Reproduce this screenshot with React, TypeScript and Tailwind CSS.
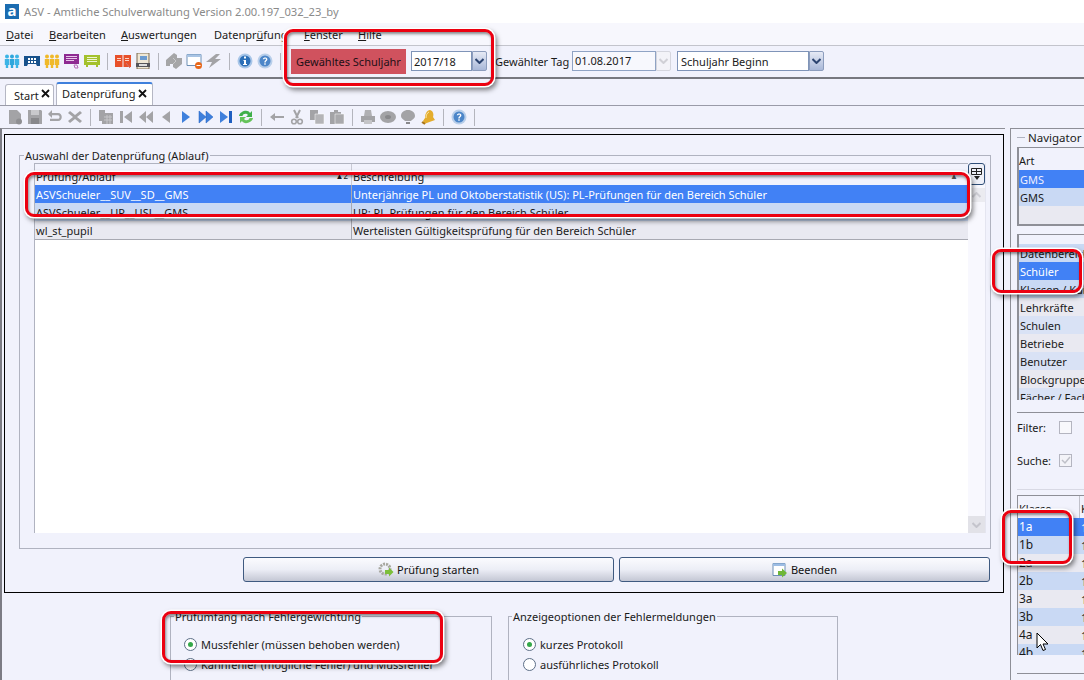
import React from 'react';

const Svg: React.FC<{ children: React.ReactNode }> = ({ children }) => (
  <svg width="16" height="16" viewBox="0 0 16 16" className="shrink-0">
    {children}
  </svg>
);

const G = '#a3a3a6';
const Blue = '#3f80dc';

const Person = ({ x, c }: { x: number; c: string }) => (
  <g fill={c}>
    <circle cx={x} cy="3.500" r="2" />
    <path d={`M${x - 2.2} 6h4.400v6h-1v3h-2.400v-3h-1z`} />
  </g>
);

const HelpIcon = () => (
  <Svg>
    <circle cx="8" cy="8" r="7.500" fill="#b9cfea" />
    <circle cx="8" cy="8" r="5.500" fill="#4c86c9" />
    <path d="M5.800 6.200C6 3.800 10.400 3.800 10.400 6.300 10.400 8 8.700 8 8.700 9.500H7.300C7.300 7.500 9 7.500 9 6.300 9 5.200 7.300 5.200 7.200 6.200zM7.300 10.300h1.400v1.500H7.300z" fill="#fff" />
  </Svg>
);

const topIcons: React.ReactNode[] = [
  <Svg key="a"><Person x={3} c="#3cb4e6" /><Person x={8} c="#2fa6dc" /><Person x={13} c="#3cb4e6" /></Svg>,
  <Svg key="b"><path d="M0 3h16v10h-3l-1-2H4l-1 2H0z" fill="#17518c" /><path d="M4 5h2v2H4zm3 0h2v2H7zm3 0h2v2h-2zM4 8h2v2H4zm3 0h2v2H7zm3 0h2v2h-2z" fill="#fff" /></Svg>,
  <Svg key="c"><Person x={3} c="#f0b92a" /><Person x={8} c="#f0b92a" /><Person x={13} c="#f0b92a" /></Svg>,
  <Svg key="d"><path d="M0 1h15v10H0z" fill="#8e2a92" /><path d="M2 3h11v1H2zm0 2h11v1H2zm0 2h8v1H2z" fill="#e9c8ea" /><path d="M10 12l3 0 1 3-3 0z" fill="none" stroke="#b56ab8" /></Svg>,
  <Svg key="e"><path d="M0 2h16v10H0z" fill="#a3c12d" /><path d="M3 4h10v1H3zm0 2h10v1H3zm0 2h10v1H3z" fill="#eef5cf" /><path d="M2 12h2v2H2zm10 0h2v2h-2z" fill="#a3c12d" /></Svg>,
  'sep',
  <Svg key="f"><path d="M0 2h7.500v12H0zM8.500 2H16v12H8.500z" fill="#e8502a" /><path d="M2 5h4v1H2zm0 2h4v1H2zm8-2h4v1h-4zm0 2h4v1h-4z" fill="#fbd3c4" /><path d="M11 10l4 5" stroke="#c77" /></Svg>,
  <Svg key="g"><path d="M2 0h12v16H2z" fill="#efe7d5" stroke="#7a6a50" /><path d="M5 3h7v4H5z" fill="#6d9bd0" /><path d="M1 10h14v4H1z" fill="#55555a" /><path d="M4 11h8v2H4z" fill="#ddd" /></Svg>,
  'sep',
  <Svg key="h"><path d="M0 7l8-7 3 2v3h5v6l-6 5-3-2v-3H4v2H0z" fill="#a5a5a7" /><path d="M7 5l3 3-3 3" fill="none" stroke="#c8c8ca" /></Svg>,
  <Svg key="i"><path d="M1 1.500h14v11H1z" fill="#fff" stroke="#6d8fb5" /><path d="M1 1.500h14v2.500H1z" fill="#a9c4e4" /><circle cx="12.500" cy="12.500" r="3.500" fill="#e8671a" /><path d="M10.500 12h4v1h-4z" fill="#fff" /></Svg>,
  <Svg key="j"><path d="M10 1L0 9h6l-3 6 12-9H9l5-5z" fill="#a3a3a6" /></Svg>,
  'sep',
  <Svg key="k"><circle cx="8" cy="8" r="7.500" fill="#a9c6e8" /><circle cx="8" cy="8" r="5.500" fill="#2c6fb8" /><path d="M7 3.500h2v2H7zM6.500 7H9v4h1v1H6v-1h1V8h-.5z" fill="#fff" /></Svg>,
  <HelpIcon key="l" />,
  'sep',
];

const subIcons: React.ReactNode[] = [
  <Svg key="a"><path d="M2 1h8l4 4v10H2z" fill={G} /><circle cx="12" cy="12.500" r="3" fill="#8f8f92" /></Svg>,
  <Svg key="b"><path d="M1 1h13l1 1v13H1z" fill={G} /><path d="M4 1h8v5H4z" fill="#c9c9cc" /><path d="M4 9h8v6H4z" fill="#88888b" /></Svg>,
  <Svg key="c"><path d="M2 4h9c5 0 5 8 0 8H3V9.800h8c2 0 2-3.600 0-3.600H2z" fill={G} /><path d="M5 1v8L1 5z" fill={G} /></Svg>,
  <Svg key="d"><path d="M3 2l5 4 5-4 2 2-5 4 5 4-2 2-5-4-5 4-2-2 5-4-5-4z" fill={G} /></Svg>,
  'sep',
  <Svg key="e"><path d="M1 1h6v3h8v11H4v-3H1z" fill={G} /><path d="M6 8h8M6 11h8M9 6v9M12 6v9" stroke="#c6c6c9" /></Svg>,
  <Svg key="f"><path d="M2 2h3v12H2zM14 2v12L6 8z" fill={G} /></Svg>,
  <Svg key="g"><path d="M8 2v12L1 8zM15 2v12L8 8z" fill={G} /></Svg>,
  <Svg key="h"><path d="M12 2v12L4 8z" fill={G} /></Svg>,
  <Svg key="i"><path d="M4 2v12l8-6z" fill={Blue} /></Svg>,
  <Svg key="j"><path d="M8 2v12l7-6zM1 2v12l7-6z" fill={Blue} stroke="#1f5fc0" strokeWidth=".5" /></Svg>,
  <Svg key="k"><path d="M2 2v12l8-6z" fill={Blue} /><path d="M11 2h3v12h-3z" fill="#1f5fc0" /></Svg>,
  <Svg key="l"><path d="M1 7c1-5 9-7 11-3l2-2v6H8l2-2C8.500 4 5 4.500 4.500 7z" fill="#3faf4a" /><path d="M15 9c-1 5-9 7-11 3l-2 2V8h6l-2 2c1.500 2 5 1.500 5.500-1z" fill="#65c35a" /></Svg>,
  'sep',
  <Svg key="m"><path d="M1 8l5-4v3h9v2H6v3z" fill={G} /></Svg>,
  <Svg key="n"><path d="M5 1l4 8M11 1L7 9" stroke={G} strokeWidth="2" /><circle cx="5" cy="12.500" r="2.300" fill="none" stroke={G} strokeWidth="1.600" /><circle cx="11" cy="12.500" r="2.300" fill="none" stroke={G} strokeWidth="1.600" /></Svg>,
  <Svg key="o"><path d="M1 1h8v10H1z" fill={G} /><path d="M6 5h9v10H6z" fill="#b4b4b7" stroke="#fff" strokeWidth=".5" /></Svg>,
  <Svg key="p"><path d="M1 3h4V1h4v2h3v12H1z" fill={G} /><path d="M6 5h9v10H6z" fill="#a9a9ac" stroke="#fff" strokeWidth=".5" /></Svg>,
  'sep',
  <Svg key="q"><path d="M5 1h6l1 6H4z" fill="#b0b0b3" /><path d="M1 7h14v6H1z" fill={G} /><path d="M4 11h8v4H4z" fill="#c4c4c7" /></Svg>,
  <Svg key="r"><ellipse cx="8" cy="8" rx="8" ry="6" fill={G} /><ellipse cx="8" cy="8" rx="3" ry="2" fill="#88888b" /></Svg>,
  <Svg key="s"><path d="M8 1c4 0 7 2.500 7 6 0 2.500-3 3.500-4 5H5C4 10.500 1 9.500 1 7c0-3.500 3-6 7-6z" fill={G} /><path d="M6 13h4v2H6z" fill="#88888b" /></Svg>,
  <Svg key="t"><path d="M10 1c3 1 4 4 3 7l2 3-11 4-1-3 2-3c0-4 2-8 5-8z" fill="#e4ad2e" /><path d="M2 13l3 2" stroke="#a8741a" strokeWidth="2" /><path d="M9 3c-2 1-3 3-3 6" stroke="#fbe7a6" fill="none" /></Svg>,
  'sep',
  <HelpIcon key="u" />,
  'sep',
];

const IconRow: React.FC<{ items: React.ReactNode[]; className: string }> = ({ items, className }) => (
  <div className={`flex items-center gap-1 ${className}`}>
    {items.map((it, i) =>
      it === 'sep' ? <div key={i} className="w-px h-[17px] mx-[3px] bg-[#b4b5bd] shrink-0" /> : it,
    )}
  </div>
);

const Arrow: React.FC<{ disabled?: boolean }> = ({ disabled }) => (
  <div
    className={`w-[15px] h-[20px] shrink-0 flex items-center justify-center rounded-r-[2px] border ${
      disabled ? 'border-[#d5d6de] bg-[#f3f3f8]' : 'border-[#8c9dbd] bg-gradient-to-b from-[#e6eaf5] to-[#a9b8d8]'
    }`}
  >
    <svg width="9" height="6" viewBox="0 0 9 6">
      <path d="M.5 1L4.500 5 8.500 1" fill="none" stroke={disabled ? '#d0d0d6' : '#2c4470'} strokeWidth="2" />
    </svg>
  </div>
);

const Highlight: React.FC<{ className: string }> = ({ className }) => (
  <div
    className={`absolute rounded-[9px] border-[3px] border-[#ec0010] shadow-[0_0_0_1.5px_#fff,2px_3px_5px_1px_rgba(0,0,0,0.5),inset_1px_2px_3px_rgba(0,0,0,0.45)] pointer-events-none ${className}`}
  />
);

const Radio: React.FC<{ checked?: boolean; label: string }> = ({ checked, label }) => (
  <div className="flex items-center h-5 gap-[4px]">
    <div className="w-[13px] h-[13px] rounded-full border border-[#5d6f87] bg-white flex items-center justify-center shrink-0">
      {checked && <div className="w-[5px] h-[5px] rounded-full bg-[#35a84a]" />}
    </div>
    <span>{label}</span>
  </div>
);

const ActionButton: React.FC<{ icon: React.ReactNode; label: string }> = ({ icon, label }) => (
  <button className="w-[371px] h-[25px] rounded-[3px] border border-[#3f5a80] bg-gradient-to-b from-[#fbfbfe] via-[#eceef6] to-[#c4c7d4] flex items-center justify-center gap-[3px] text-[#111]">
    {icon}
    <span>{label}</span>
  </button>
);

const TabClose = () => (
  <svg width="9" height="9" viewBox="0 0 9 9" className="shrink-0 mb-[3px]">
    <path d="M1 1l7 7M8 1L1 8" stroke="#111" strokeWidth="1.800" />
  </svg>
);

const Cell: React.FC<{ className?: string; children?: React.ReactNode }> = ({ className = '', children }) => (
  <div className={`flex items-center pl-[1px] whitespace-nowrap overflow-hidden ${className}`}>{children}</div>
);

const checkRows = [
  { a: 'ASVSchueler__SUV__SD__GMS', b: 'Unterjährige PL und Oktoberstatistik (US): PL-Prüfungen für den Bereich Schüler', cls: 'h-[18px] bg-[#4181f5] text-white' },
  { a: 'ASVSchueler__UP__USL__GMS', b: 'UP: PL-Prüfungen für den Bereich Schüler', cls: 'h-[18px] bg-[#c9d9f4]' },
  { a: 'wl_st_pupil', b: 'Wertelisten Gültigkeitsprüfung für den Bereich Schüler', cls: 'h-[19px] bg-[#e9e9f1] border-b border-[#a8a9b2]' },
];

const areas = [
  { t: 'Datenbereich', c: 'bg-[#c9d9f4]' },
  { t: 'Schüler', c: 'bg-[#4181f5] text-white' },
  { t: 'Klassen / Kurse', c: 'bg-[#c9d9f4]' },
  { t: 'Lehrkräfte', c: 'bg-[#e9e9f1]' },
  { t: 'Schulen', c: 'bg-[#d9e2f5]' },
  { t: 'Betriebe', c: 'bg-[#e9e9f1]' },
  { t: 'Benutzer', c: 'bg-[#d9e2f5]' },
  { t: 'Blockgruppen', c: 'bg-[#e9e9f1]' },
  { t: 'Fächer / Fachgruppen', c: 'bg-[#d9e2f5]' },
];

const classes = [
  { t: '1a', c: 'bg-[#4181f5] text-white' },
  { t: '1b', c: 'bg-[#c9d9f4]' },
  { t: '2a', c: 'bg-[#e9e9f1]' },
  { t: '2b', c: 'bg-[#c9d9f4]' },
  { t: '3a', c: 'bg-[#e9e9f1]' },
  { t: '3b', c: 'bg-[#c9d9f4]' },
  { t: '4a', c: 'bg-[#e9e9f1]' },
  { t: '4b', c: 'bg-[#c9d9f4]' },
];

const menu = [
  { pre: '', u: 'D', rest: 'atei', w: 'w-[43px]' },
  { pre: '', u: 'B', rest: 'earbeiten', w: 'w-[72px]' },
  { pre: '', u: 'A', rest: 'uswertungen', w: 'w-[93px]' },
  { pre: 'Datenpr', u: 'ü', rest: 'fung', w: 'w-[90px]' },
  { pre: '', u: 'F', rest: 'enster', w: 'w-[54px]' },
  { pre: '', u: 'H', rest: 'ilfe', w: 'w-[40px]' },
];

export default function App() {
  return (
    <div className="relative w-[1084px] h-[680px] overflow-hidden flex flex-col bg-[#f1f2fc] text-[11px] leading-none text-[#1a1a1a] font-['Noto_Sans',sans-serif]">
      {/* title bar */}
      <div className="h-[23px] bg-white flex items-center pl-[5px] gap-[5px] shrink-0">
        <div className="w-[14px] h-[15px] bg-[#1b6cb0] flex items-center justify-center text-white text-[15px] font-bold leading-none pb-[2px]">a</div>
        <span className="text-[#8a8a8a] text-[11.200px]">ASV - Amtliche Schulverwaltung Version 2.00.197_032_23_by</span>
      </div>

      {/* menu */}
      <div className="h-[23px] bg-[#f7f7fd] border-b border-[#c3c4cc] flex items-center pl-[6px] pt-[1px] shrink-0">
        {menu.map(m => (
          <div key={m.rest} className={`${m.w} shrink-0`}>
            {m.pre}
            <span className="underline">{m.u}</span>
            {m.rest}
          </div>
        ))}
      </div>

      {/* main toolbar */}
      <div className="h-[33px] flex items-center pl-1 pb-[1px] border-b-2 border-[#77787f] shrink-0">
        <IconRow items={topIcons} className="" />
        <div className="ml-[7px] w-[115px] h-[25px] bg-[#d0525e] flex items-center justify-center text-[#1d1016]">Gewähltes Schuljahr</div>
        <div className="ml-[5px] w-[61px] h-[20px] border border-[#7f94b8] bg-white flex items-center pl-[2px]">2017/18</div>
        <Arrow />
        <span className="ml-[8px] w-[77px]">Gewählter Tag</span>
        <div className="w-[84px] h-[20px] border border-[#8fa3c4] bg-[#f7f8fd] flex items-center pl-[2px] pb-[2px]">01.08.2017</div>
        <Arrow disabled />
        <div className="ml-[6px] w-[132px] h-[20px] border border-[#7f94b8] bg-white flex items-center pl-[3px]">Schuljahr Beginn</div>
        <Arrow />
      </div>

      {/* tabs */}
      <div className="h-[27px] flex items-end pl-[5px] gap-[2px] border-b border-[#9a9ba8] shrink-0">
        <div className="w-[49px] h-[21px] border border-b-0 border-[#b5b7c4] rounded-t-[3px] bg-white flex items-center pl-2 gap-[2px]">
          <span>Start</span>
          <TabClose />
        </div>
        <div className="w-[97px] h-[23px] border border-b-0 border-[#b5b7c4] border-t-2 border-t-[#3f80dc] rounded-t-[3px] bg-white flex items-center pl-[5px] gap-[3px]">
          <span className="pb-[2px]">Datenprüfung</span>
          <TabClose />
        </div>
      </div>

      {/* sub toolbar */}
      <IconRow items={subIcons} className="h-[22px] pl-[7px] shrink-0" />

      <div className="flex flex-1 min-h-0">
        {/* left column */}
        <div className="w-[1005px] shrink-0 border-t border-l-2 border-t-[#8e8f97] border-l-[#7c7c84]">
          <div className="ml-[2px] mt-[5px] w-[1000px] h-[459px] border border-black pt-[13px] pl-[14px]">
            <fieldset className="w-[972px] h-[401px] border border-[#b0b3c0] pl-[14px]">
              <legend className="ml-[-10px] px-[1px] h-[15px] flex items-center">Auswahl der Datenprüfung (Ablauf)</legend>
              <div className="flex h-[370px]">
                <div className="w-[934px] bg-white border-l border-t border-[#b0b3c0]">
                  <div className="h-[21px] flex bg-[#f1f2fc]">
                    <Cell className="w-[316px] shrink-0 pt-[3px] justify-between pr-[3px]">
                      <span>Prüfung/Ablauf</span>
                      <span className="text-[8px]">▲2</span>
                    </Cell>
                    <Cell className="flex-1 pt-[3px] border-l border-[#c9cad4] justify-between pr-[10px]">
                      <span>Beschreibung</span>
                      <span className="text-[8px] text-[#555]">▲</span>
                    </Cell>
                  </div>
                  {checkRows.map(r => (
                    <div key={r.a} className={`flex ${r.cls}`}>
                      <Cell className="w-[316px] shrink-0">{r.a}</Cell>
                      <Cell className="flex-1 border-l border-[#a8a9b2]">{r.b}</Cell>
                    </div>
                  ))}
                </div>
                <div className="w-[18px] flex flex-col bg-[#f8f8fe] border-r border-[#e4e5f0]">
                  <div className="w-[17px] h-[22px] rounded-[3px] border border-[#2f4e78] bg-[#eef0f8] flex items-center justify-center">
                    <svg width="13" height="14" viewBox="0 0 13 14">
                      <path d="M1.500 1.500h10v6h-10zM1.500 4.500h10M6.500 1.500v6" fill="none" stroke="#222" />
                      <path d="M4 9h6l-3 4z" fill="#222" />
                    </svg>
                  </div>
                  <div className="mt-[3px] h-[14px] bg-[#ebebf0] flex items-center justify-center">
                    <svg width="9" height="6" viewBox="0 0 9 6"><path d="M.5 5L4.500 1l4 4" fill="none" stroke="#cfcfd6" strokeWidth="2" /></svg>
                  </div>
                  <div className="mt-auto h-[17px] bg-[#e2e2e8] flex items-center justify-center">
                    <svg width="9" height="6" viewBox="0 0 9 6"><path d="M.5 1l4 4 4-4" fill="none" stroke="#c4c4cc" strokeWidth="2" /></svg>
                  </div>
                </div>
              </div>
            </fieldset>
            <div className="mt-[8px] ml-[224px] flex gap-[5px]">
              <ActionButton
                label="Prüfung starten"
                icon={
                  <Svg>
                    <circle cx="7" cy="7" r="5" fill="none" stroke="#a7a79f" strokeWidth="3" strokeDasharray="2 1" />
                    <path d="M7 8h4V5.500L15.500 10 11 14.500V12H7z" fill="#7cbf3a" />
                  </Svg>
                }
              />
              <ActionButton
                label="Beenden"
                icon={
                  <Svg>
                    <path d="M1 1.500h12v12H1z" fill="#fff" stroke="#6d8fb5" />
                    <path d="M1 1.500h12V4H1z" fill="#9dbde4" />
                    <path d="M6 9h4V6.500l5 4.500-5 4.500V13H6z" fill="#6fb737" />
                  </Svg>
                }
              />
            </div>
          </div>

          <div className="flex mt-[16px] ml-[168px] gap-[16px]">
            <fieldset className="w-[322px] h-[100px] border border-[#b0b3c0] pl-[13px]">
              <legend className="ml-[-10px] px-[1px] h-[15px] flex items-center">Prüfumfang nach Fehlergewichtung</legend>
              <div className="pt-[10px]">
                <Radio checked label="Mussfehler (müssen behoben werden)" />
                <Radio label="Kannfehler (mögliche Fehler) und Mussfehler" />
              </div>
            </fieldset>
            <fieldset className="w-[330px] h-[100px] border border-[#b0b3c0] pl-[14px]">
              <legend className="ml-[-11px] px-[1px] h-[15px] flex items-center">Anzeigeoptionen der Fehlermeldungen</legend>
              <div className="pt-[10px]">
                <Radio checked label="kurzes Protokoll" />
                <Radio label="ausführliches Protokoll" />
              </div>
            </fieldset>
          </div>
        </div>

        {/* navigator */}
        <div className="ml-[5px] w-[200px] shrink-0 border-l border-t border-[#8e8f97] pl-[6px] pt-[1px] flex flex-col">
          <fieldset className="border-t border-[#b0b3c0]">
            <legend className="ml-[8px] px-[3px] h-[15px] flex items-center text-[11.500px]">Navigator</legend>
          </fieldset>
          <div className="mt-[2px] h-[79px] w-[120px] border-l-2 border-t border-b-2 border-[#8e8f97] bg-[#e9e9f1]">
            <div className="h-[22px] bg-[#f1f2fc] flex items-center pt-[2px]">Art</div>
            <Cell className="h-[18px] bg-[#4181f5] text-[#eef]">GMS</Cell>
            <Cell className="h-[18px] bg-[#c9d9f4]">GMS</Cell>
          </div>
          <div className="mt-[8px] h-[166px] w-[120px] border-l-2 border-t border-[#8e8f97] overflow-hidden">
            <div className="h-[9px] bg-[#f1f2fc]" />
            {areas.map(a => (
              <Cell key={a.t} className={`h-[18px] shrink-0 ${a.c}`}>{a.t}</Cell>
            ))}
          </div>
          <div className="mt-[12px] border-t border-[#8e8f97] h-[76px] flex flex-col">
            <div className="flex items-center h-[15px] mt-[7px]">
              <span className="w-[42px]">Filter:</span>
              <div className="w-[13px] h-[13px] border border-[#b4b5c0] bg-[#f8f8fc]" />
            </div>
            <div className="flex items-center h-[15px] mt-[18px]">
              <span className="w-[42px]">Suche:</span>
              <div className="w-[13px] h-[13px] border border-[#b4b5c0] bg-[#f3f3f8] flex items-center justify-center">
                <svg width="10" height="9" viewBox="0 0 10 9"><path d="M1 4l3 3 5-6" fill="none" stroke="#bfc0c8" strokeWidth="1.500" /></svg>
              </div>
            </div>
          </div>
          <div className="border-t border-[#d8d9e4] mt-px pt-[5px]">
            <div className="h-[160px] w-[120px] border-l border-t border-[#8e8f97] overflow-hidden">
              <div className="h-[22px] flex">
                <Cell className="w-[62px] shrink-0 pt-[3px] border-r border-[#c0c1ca]">Klasse</Cell>
                <Cell className="pt-[3px]">Klassenname</Cell>
              </div>
              {classes.map(c => (
                <div key={c.t} className={`h-[18px] flex ${c.c}`}>
                  <Cell className="w-[62px] shrink-0 text-[12px]">{c.t}</Cell>
                  <Cell>1</Cell>
                </div>
              ))}
            </div>
          </div>
          <div className="mt-[18px] border-t border-[#8e8f97]" />
        </div>
      </div>

      {/* red annotations */}
      <Highlight className="left-[284px] top-[29px] w-[210px] h-[57px]" />
      <Highlight className="left-[25px] top-[172px] w-[945px] h-[45px]" />
      <Highlight className="left-[992px] top-[249px] w-[90px] h-[44px]" />
      <Highlight className="left-[1002px] top-[510px] w-[70px] h-[54px]" />
      <Highlight className="left-[162px] top-[611px] w-[281px] h-[52px]" />

      {/* mouse pointer */}
      <svg className="absolute left-[1036px] top-[632px]" width="13" height="20" viewBox="0 0 13 20">
        <path d="M1 1v15l3.500-3.500L7 18.500l2.500-1L7 12h5z" fill="#fff" stroke="#000" />
      </svg>
    </div>
  );
}
